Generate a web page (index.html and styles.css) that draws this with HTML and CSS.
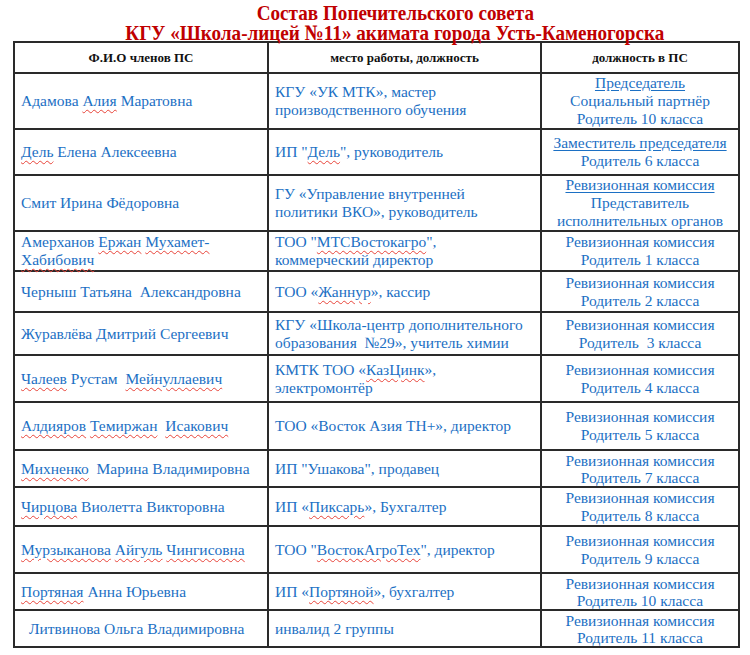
FILE: index.html
```html
<!DOCTYPE html>
<html lang="ru">
<head>
<meta charset="utf-8">
<title>Состав Попечительского совета</title>
<link rel="stylesheet" href="styles.css">
</head>
<body>
<div class="page">
  <h1 class="title">
    <span class="tline">Состав Попечительского совета</span>
    <span class="tline">КГУ «Школа-лицей №11» акимата города Усть-Каменогорска</span>
  </h1>
  <table class="board">
    <colgroup>
      <col class="c1"><col class="c2"><col class="c3">
    </colgroup>
    <thead>
      <tr class="h-head">
        <th>Ф.И.О членов ПС</th>
        <th>место работы, должность</th>
        <th>должность в ПС</th>
      </tr>
    </thead>
    <tbody>
      <tr class="r1">
        <td class="name">Адамова <span class="sp">Алия</span> Маратовна</td>
        <td class="work">КГУ «УК МТК», мастер<br>производственного обучения</td>
        <td class="role"><span class="ul">Председатель</span><br>Социальный партнёр<br>Родитель 10 класса</td>
      </tr>
      <tr class="r2">
        <td class="name"><span class="sp">Дель</span> Елена Алексеевна</td>
        <td class="work">ИП "<span class="sp">Дель</span>", руководитель</td>
        <td class="role"><span class="ul">Заместитель председателя</span><br>Родитель 6 класса</td>
      </tr>
      <tr class="r3">
        <td class="name">Смит Ирина Фёдоровна</td>
        <td class="work">ГУ «Управление внутренней<br>политики ВКО», руководитель</td>
        <td class="role"><span class="ul">Ревизионная комиссия</span><br>Представитель<br>исполнительных органов</td>
      </tr>
      <tr class="r4">
        <td class="name">Амерханов <span class="sp">Ержан</span> <span class="sp">Мухамет-</span><br><span class="sp">Хабибович</span></td>
        <td class="work">ТОО "<span class="sp">МТСВостокагро</span>",<br>коммерческий директор</td>
        <td class="role">Ревизионная комиссия<br>Родитель 1 класса</td>
      </tr>
      <tr class="r5">
        <td class="name">Черныш Татьяна&nbsp; Александровна</td>
        <td class="work">ТОО «<span class="sp">Жаннур</span>», кассир</td>
        <td class="role">Ревизионная комиссия<br>Родитель 2 класса</td>
      </tr>
      <tr class="r6">
        <td class="name">Журавлёва Дмитрий Сергеевич</td>
        <td class="work">КГУ «Школа-центр дополнительного<br>образования&nbsp; №29», учитель химии</td>
        <td class="role">Ревизионная комиссия<br>Родитель&nbsp; 3 класса</td>
      </tr>
      <tr class="r7">
        <td class="name"><span class="sp">Чалеев</span> Рустам&nbsp; <span class="sp">Мейнуллаевич</span></td>
        <td class="work">КМТК ТОО «<span class="sp">КазЦинк</span>»,<br>электромонтёр</td>
        <td class="role">Ревизионная комиссия<br>Родитель 4 класса</td>
      </tr>
      <tr class="r8">
        <td class="name"><span class="sp">Алдияров</span> <span class="sp">Темиржан</span>&nbsp; <span class="sp">Исакович</span></td>
        <td class="work">ТОО «Восток Азия ТН+», директор</td>
        <td class="role">Ревизионная комиссия<br>Родитель 5 класса</td>
      </tr>
      <tr class="r9 tight">
        <td class="name"><span class="sp">Михненко</span>&nbsp; Марина Владимировна</td>
        <td class="work">ИП "Ушакова", продавец</td>
        <td class="role">Ревизионная комиссия<br>Родитель 7 класса</td>
      </tr>
      <tr class="r10">
        <td class="name"><span class="sp">Чирцова</span> Виолетта Викторовна</td>
        <td class="work">ИП «<span class="sp">Пиксарь</span>», Бухгалтер</td>
        <td class="role">Ревизионная комиссия<br>Родитель 8 класса</td>
      </tr>
      <tr class="r11">
        <td class="name"><span class="sp">Мурзыканова</span> <span class="sp">Айгуль</span> <span class="sp">Чингисовна</span></td>
        <td class="work">ТОО "<span class="sp">ВостокАгроТех</span>", директор</td>
        <td class="role">Ревизионная комиссия<br>Родитель 9 класса</td>
      </tr>
      <tr class="r12 tight">
        <td class="name"><span class="sp">Портяная</span> Анна Юрьевна</td>
        <td class="work">ИП «<span class="sp">Портяной</span>», бухгалтер</td>
        <td class="role">Ревизионная комиссия<br>Родитель 10 класса</td>
      </tr>
      <tr class="r13 tight">
        <td class="name indent">Литвинова Ольга Владимировна</td>
        <td class="work">инвалид 2 группы</td>
        <td class="role">Ревизионная комиссия<br>Родитель 11 класса</td>
      </tr>
    </tbody>
  </table>
</div>
</body>
</html>
```

FILE: styles.css
```css
html, body {
  margin: 0;
  padding: 0;
  background: #ffffff;
}

.page {
  width: 750px;
  font-family: "Liberation Serif", "Times New Roman", serif;
}

.title {
  margin: 0;
  padding: 3px 0 0 40px;
  height: 38px;
  display: flex;
  flex-direction: column;
  align-items: center;
  color: #c00000;
  font-weight: bold;
  font-size: 22px;
  line-height: 20px;
}

.tline {
  display: block;
  transform: scaleX(0.87);
  white-space: nowrap;
}

.board {
  margin-left: 13px;
  width: 725px;
  border-collapse: collapse;
  table-layout: fixed;
  color: #1c70c4;
  font-size: 15.5px;
  line-height: 18px;
}

.c1 { width: 254px; }
.c2 { width: 273px; }
.c3 { width: 198px; }

.board th,
.board td {
  border: 2px solid #2a2a2a;
  padding: 0 6px;
  vertical-align: middle;
}

.board th {
  color: #111111;
  font-size: 13px;
  font-weight: bold;
  text-align: center;
  height: 29px;
}

.board td.role { text-align: center; }
.board td.indent { padding-left: 14px; }

.board .tight td { line-height: 17px; }

.sp {
  text-decoration: underline wavy #e8443a;
  text-decoration-thickness: 1px;
  text-underline-offset: 3px;
}

.ul {
  text-decoration: underline;
  text-decoration-color: #1c70c4;
  text-underline-offset: 2px;
}

.r1 td { height: 54px; }
.r2 td { height: 44px; }
.r3 td { height: 53px; }
.r4 td { height: 38px; }
.r5 td { height: 39px; }
.r6 td { height: 41px; }
.r7 td { height: 45px; }
.r8 td { height: 46px; }
.r9 td { height: 35px; }
.r10 td { height: 37px; }
.r11 td { height: 45px; }
.r12 td { height: 35px; }
.r13 td { height: 35px; }
```
